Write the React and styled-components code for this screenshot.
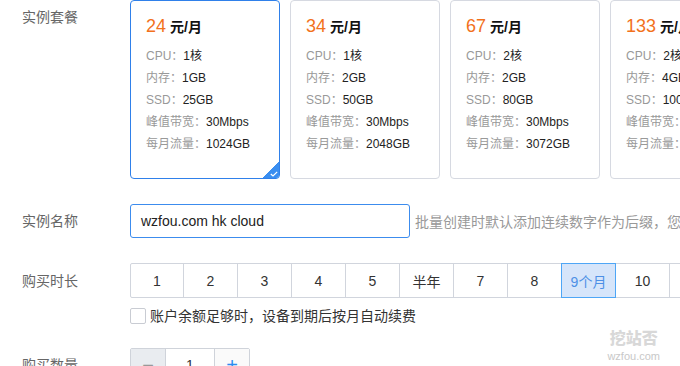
import React from 'react'
import styled, { createGlobalStyle } from 'styled-components'

const GlobalStyle = createGlobalStyle`
  html, body {
    margin: 0;
    padding: 0;
    background: #fff;
    overflow: hidden;
  }
  body {
    font-family: "Liberation Sans", "Noto Sans CJK SC", Arial, sans-serif;
    color: #333;
    font-size: 14px;
  }
`

const Page = styled.div`
  position: relative;
  width: 680px;
  height: 366px;
  overflow: hidden;
  padding-left: 22px;
  box-sizing: border-box;
`

const Row = styled.div`
  display: flex;
  align-items: ${props => props.top ? 'flex-start' : 'center'};
  margin-bottom: ${props => props.gap ?? 25}px;
`

const Label = styled.div`
  flex: 0 0 108px;
  color: #666;
  font-size: 14px;
  line-height: 20px;
  padding-top: ${props => props.pad || 0}px;
`

const Cards = styled.div`
  display: flex;
  gap: 10px;
  flex-shrink: 0;
`

const Card = styled.div`
  position: relative;
  flex: 0 0 150px;
  height: 179px;
  box-sizing: border-box;
  border: 1px solid ${props => props.active ? '#2f80ea' : '#d6d9e1'};
  border-radius: 4px;
  padding: 15px 0 0 15px;
  overflow: hidden;
`

const Price = styled.div`
  display: flex;
  align-items: baseline;
  height: 24px;
  margin-bottom: 5px;
  white-space: nowrap;
`

const Amount = styled.span`
  color: #f2711c;
  font-size: 18px;
  margin-right: 4px;
`

const Unit = styled.span`
  color: #111;
  font-size: 14px;
  font-weight: bold;
`

const Spec = styled.div`
  font-size: 12px;
  line-height: 22px;
  white-space: nowrap;
  color: #999;

  b {
    font-weight: normal;
    color: #222;
  }
`

const Corner = styled.div`
  position: absolute;
  right: 0;
  bottom: 0;
  width: 16px;
  height: 16px;
  background: linear-gradient(135deg, transparent 50%, #3a8ef0 50%);

  svg {
    position: absolute;
    right: 1px;
    bottom: 1px;
  }
`

const NameInput = styled.div`
  flex: 0 0 280px;
  height: 34px;
  box-sizing: border-box;
  border: 1px solid #3c8cee;
  border-radius: 3px;
  padding-left: 10px;
  display: flex;
  align-items: center;
  font-size: 14px;
  color: #222;
`

const Hint = styled.div`
  margin-left: 5px;
  color: #999;
  font-size: 14px;
  white-space: nowrap;
`

const Segments = styled.div`
  display: flex;
  flex-shrink: 0;
`

const Segment = styled.div`
  flex: 0 0 55px;
  height: 35px;
  box-sizing: border-box;
  margin-left: -1px;
  border: 1px solid ${props => props.active ? '#4ea6f6' : '#d1d5dd'};
  background: ${props => props.active ? '#d6e5fa' : '#fff'};
  color: ${props => props.active ? '#4d90e6' : '#333'};
  position: relative;
  z-index: ${props => props.active ? 1 : 0};
  display: flex;
  align-items: center;
  justify-content: center;
  font-size: 14px;

  &:first-child {
    margin-left: 0;
    flex-basis: 54px;
    border-radius: 2px 0 0 2px;
  }
`

const CheckRow = styled.label`
  display: flex;
  align-items: center;
  height: 20px;
  line-height: 20px;
  margin-left: 108px;
  margin-bottom: 22px;
  font-size: 14px;
  color: #333;
  white-space: nowrap;
`

const Box = styled.span`
  flex: 0 0 16px;
  height: 16px;
  box-sizing: border-box;
  border: 1px solid #c9ccd3;
  border-radius: 2px;
  margin-right: 4px;
  background: #fff;
`

const Counter = styled.div`
  display: flex;
  flex-shrink: 0;
  height: 34px;
  box-sizing: border-box;
  border: 1px solid #cfd3da;
  border-radius: 2px;
`

const Step = styled.div`
  width: ${props => props.wide ? 48 : 34}px;
  display: flex;
  align-items: center;
  justify-content: center;
  background: ${props => props.muted ? '#e9ecf0' : props.wide ? '#fff' : '#fafafa'};
  color: ${props => props.muted ? '#999' : props.wide ? '#333' : '#2d8cf0'};
  border-left: ${props => props.first ? 'none' : '1px solid #cfd3da'};
  font-size: ${props => props.wide ? 14 : 20}px;
`

const Watermark = styled.div`
  position: absolute;
  right: 20px;
  bottom: 4px;
  text-align: center;
  line-height: 1;

  strong {
    display: block;
    font-family: "Noto Sans CJK SC", sans-serif;
    font-size: 16px;
    font-weight: 900;
    color: #d8d8d8;
    margin-bottom: 3px;
  }

  span {
    font-size: 11px;
    color: #c8c8c8;
  }
`

const plans = [
  { price: 24, cpu: '1核', mem: '1GB', ssd: '25GB', bw: '30Mbps', flow: '1024GB' },
  { price: 34, cpu: '1核', mem: '2GB', ssd: '50GB', bw: '30Mbps', flow: '2048GB' },
  { price: 67, cpu: '2核', mem: '2GB', ssd: '80GB', bw: '30Mbps', flow: '3072GB' },
  { price: 133, cpu: '2核', mem: '4GB', ssd: '100GB', bw: '30Mbps', flow: '4096GB' }
]

const durations = ['1', '2', '3', '4', '5', '半年', '7', '8', '9个月', '10', '11']

function PlanCard ({ plan, active }) {
  return (
    <Card active={active}>
      <Price>
        <Amount>{plan.price}</Amount>
        <Unit>元/月</Unit>
      </Price>
      <Spec>CPU：<b>{plan.cpu}</b></Spec>
      <Spec>内存：<b>{plan.mem}</b></Spec>
      <Spec>SSD：<b>{plan.ssd}</b></Spec>
      <Spec>峰值带宽：<b>{plan.bw}</b></Spec>
      <Spec>每月流量：<b>{plan.flow}</b></Spec>
      {active && (
        <Corner>
          <svg width='8' height='6' viewBox='0 0 8 6'>
            <path d='M0.8 3 L3 5 L7.2 0.8' fill='none' stroke='#fff' strokeWidth='1.2' />
          </svg>
        </Corner>
      )}
    </Card>
  )
}

export default function App () {
  return (
    <Page>
      <GlobalStyle />
      <Row top>
        <Label pad={7}>实例套餐</Label>
        <Cards>
          {plans.map((p, i) => <PlanCard key={p.price} plan={p} active={i === 0} />)}
        </Cards>
      </Row>
      <Row>
        <Label>实例名称</Label>
        <NameInput>wzfou.com hk cloud</NameInput>
        <Hint>批量创建时默认添加连续数字作为后缀，您可以自定义</Hint>
      </Row>
      <Row gap={8}>
        <Label>购买时长</Label>
        <Segments>
          {durations.map(d => <Segment key={d} active={d === '9个月'}>{d}</Segment>)}
        </Segments>
      </Row>
      <CheckRow>
        <Box />
        账户余额足够时，设备到期后按月自动续费
      </CheckRow>
      <Row>
        <Label>购买数量</Label>
        <Counter>
          <Step muted first>−</Step>
          <Step wide>1</Step>
          <Step>+</Step>
        </Counter>
      </Row>
      <Watermark>
        <strong>挖站否</strong>
        <span>wzfou.com</span>
      </Watermark>
    </Page>
  )
}
